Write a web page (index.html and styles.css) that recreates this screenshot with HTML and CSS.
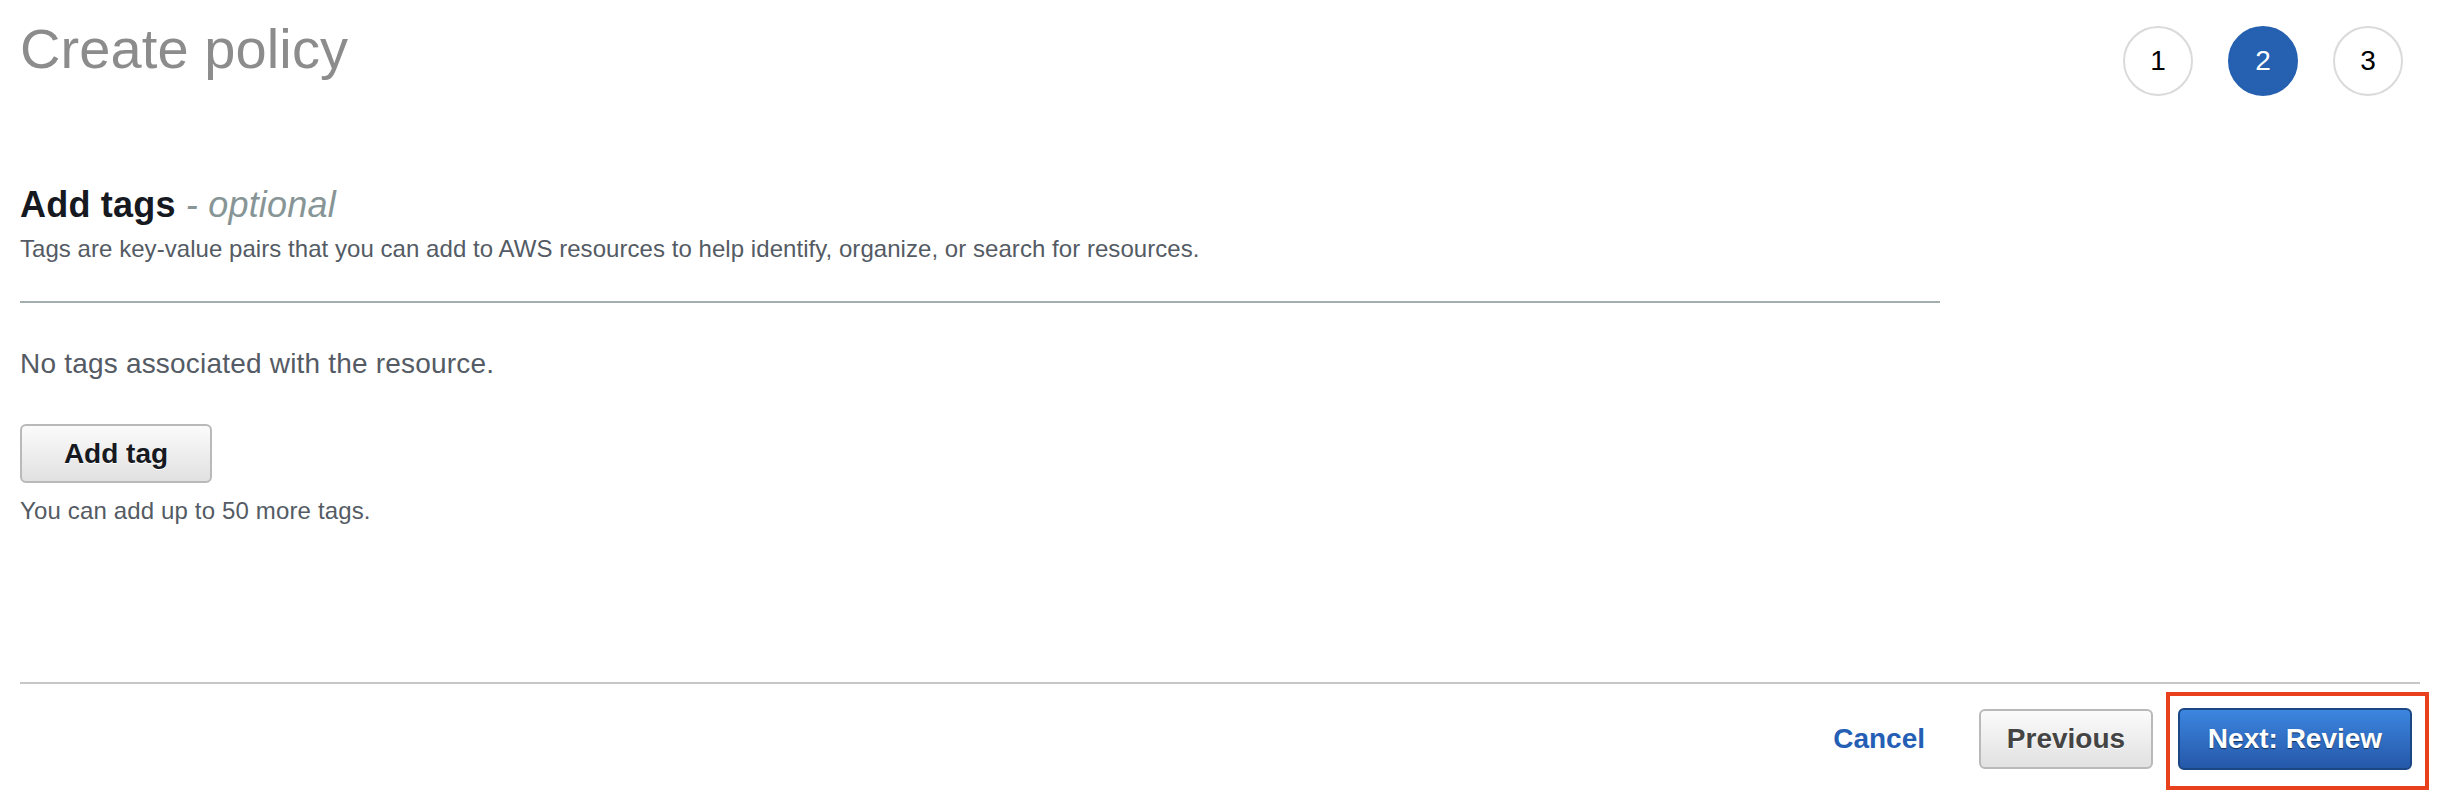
FILE: index.html
```html
<!DOCTYPE html>
<html lang="en">
<head>
<meta charset="utf-8">
<title>Create policy</title>
<link rel="stylesheet" href="styles.css">
</head>
<body>
<div class="page">
  <header class="header">
    <h1 class="title">Create policy</h1>
    <ol class="steps">
      <li class="step">1</li>
      <li class="step step-active">2</li>
      <li class="step">3</li>
    </ol>
  </header>

  <section class="tags">
    <h2 class="tags-heading">Add tags <span class="optional">- optional</span></h2>
    <p class="tags-desc">Tags are key-value pairs that you can add to AWS resources to help identify, organize, or search for resources.</p>
    <hr class="divider">
    <p class="empty">No tags associated with the resource.</p>
    <button class="btn btn-secondary btn-add" type="button">Add tag</button>
    <p class="hint">You can add up to 50 more tags.</p>
  </section>

  <footer class="footer">
    <a class="cancel" href="#">Cancel</a>
    <button class="btn btn-secondary btn-prev" type="button">Previous</button>
    <div class="highlight">
      <button class="btn btn-primary" type="button">Next: Review</button>
    </div>
  </footer>
</div>
</body>
</html>
```

FILE: styles.css
```css
* { box-sizing: border-box; }

html, body {
  margin: 0;
  padding: 0;
  background: #ffffff;
}

body {
  font-family: "Liberation Sans", Arial, Helvetica, sans-serif;
  color: #545b64;
}

.page {
  width: 2460px;
  padding: 0 40px 0 20px;
}

/* Header */
.header {
  display: flex;
  justify-content: space-between;
  align-items: flex-start;
  padding-top: 17px;
}

.title {
  margin: 0;
  font-size: 56px;
  line-height: 64px;
  font-weight: 400;
  color: #8c8c8c;
  letter-spacing: 0.1px;
}

.steps {
  list-style: none;
  margin: 9px 17px 0 0;
  padding: 0;
  display: flex;
  gap: 35px;
}

.step {
  width: 70px;
  height: 70px;
  border-radius: 50%;
  border: 2px solid #dadada;
  display: flex;
  align-items: center;
  justify-content: center;
  font-size: 28px;
  color: #000000;
  background: #ffffff;
}

.step-active {
  background: #2660b0;
  border-color: #2660b0;
  color: #ffffff;
}

/* Tags section */
.tags {
  width: 1920px;
  margin-top: 87px;
}

.tags-heading {
  margin: 0;
  font-size: 36px;
  line-height: 44px;
  font-weight: 700;
  color: #16191f;
  letter-spacing: 0.2px;
}

.optional {
  font-style: italic;
  font-weight: 400;
  color: #879596;
}

.tags-desc {
  margin: 7px 0 0;
  font-size: 24px;
  line-height: 30px;
  color: #545b64;
  letter-spacing: 0.05px;
}

.divider {
  margin: 37px 0 0;
  border: 0;
  border-top: 2px solid #a5aeae;
  height: 0;
}

.empty {
  margin: 44px 0 0;
  font-size: 28px;
  line-height: 34px;
  color: #545b64;
  letter-spacing: 0.2px;
}

.hint {
  margin: 13px 0 0;
  font-size: 24px;
  line-height: 30px;
  color: #545b64;
  letter-spacing: 0.15px;
}

/* Buttons */
.btn {
  font-family: "Liberation Sans", Arial, Helvetica, sans-serif;
  font-weight: 700;
  font-size: 28px;
  line-height: 32px;
  border-radius: 6px;
  cursor: pointer;
  display: flex;
  align-items: center;
  justify-content: center;
  margin: 0;
  padding: 0;
}

.btn-secondary {
  background: linear-gradient(#fbfbfb, #e1e1e1);
  border: 2px solid #b9b9b9;
  color: #16191f;
  text-shadow: 0 1px 0 #ffffff;
}

.btn-add {
  margin-top: 43px;
  width: 192px;
  height: 59px;
}

.btn-prev {
  width: 174px;
  height: 60px;
  color: #444444;
  margin-top: 17px;
  margin-right: 13px;
}

.btn-primary {
  width: 234px;
  height: 62px;
  background: linear-gradient(#3c86e0, #2558a9);
  border: 2px solid #1b4785;
  color: #ffffff;
  text-shadow: 0 1px 1px rgba(0, 0, 0, 0.55);
}

/* Footer */
.footer {
  margin-top: 156px;
  border-top: 2px solid #c6c6c6;
  padding: 8px 8px 0 0;
  display: flex;
  justify-content: flex-end;
  align-items: flex-start;
}

.cancel {
  font-size: 28px;
  font-weight: 700;
  line-height: 32px;
  color: #255fb5;
  text-decoration: none;
  margin-top: 31px;
  margin-right: 54px;
}

/* annotation frame around the primary action */
.highlight {
  display: flex;
  border: 4px solid #e8401c;
  padding: 12px 13px 16px 8px;
  margin-right: -17px;
}
```
